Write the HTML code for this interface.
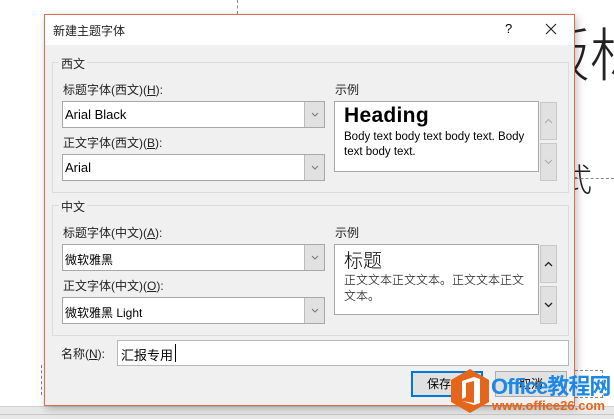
<!DOCTYPE html>
<html><head><meta charset="utf-8"><style>
*{margin:0;padding:0;box-sizing:border-box}
body{width:614px;height:419px;overflow:hidden;background:#fff;position:relative;font-family:"Liberation Sans","Noto Sans CJK SC",sans-serif;font-size:12px;color:#000}
.abs{position:absolute;white-space:nowrap}
.clip{position:absolute;left:0;top:0;width:614px;height:419px;overflow:hidden}
.dlg{left:44px;top:14px;width:531px;height:392px;border:1px solid #d4704a;background:#f0f0f0;box-shadow:2px 3px 8px rgba(0,0,0,.25)}
.tb{left:0;top:0;width:529px;height:30px;background:#fff}
.grp{border:1px solid #dcdcdc}
.lbl{font-size:12px;color:#222;white-space:nowrap}
.combo{background:#fff;border:1px solid #a8a8a8;height:27px;width:263px}
.combo span{position:absolute;left:2px;top:5px;font-size:13px}
.dd{position:absolute;right:0;top:0;width:20px;height:25px;background:#e1e1e1;border-left:1px solid #bcbcbc}
.sample{background:#fff;border:1px solid #a8a8a8}
.sb{background:#e1e1e1;border:1px solid #c8c8c8;width:17px}
.btn{border:1px solid #adadad;background:#e1e1e1;height:26px;width:72px;text-align:center;line-height:24px;font-size:12px}
u{text-decoration:underline}
</style></head><body>
<div class="clip">
<div class="abs" style="left:532px;top:16px;width:82px;overflow:hidden;font-size:58px;line-height:70px;color:#222;font-family:'Noto Sans CJK SC',sans-serif;font-weight:300">版标</div>
<div class="abs" style="left:560px;top:155px;font-size:32px;color:#222;font-family:'Noto Sans CJK SC',sans-serif;font-weight:300">式</div>
<div class="abs" style="left:560px;top:178px;width:54px;border-top:1px dashed #888"></div>
<div class="abs" style="left:237px;top:0;height:14px;border-left:1px dashed #888"></div>
<div class="abs" style="left:41px;top:365px;height:30px;border-left:1px dashed #888"></div>
<div class="abs" style="left:575px;top:370px;width:28px;height:28px;border:1px dashed #888;border-left:none"></div>
<div class="abs" style="left:0;top:406px;width:614px;height:13px;background:#e8e8e8;border-top:1px solid #d0d0d0"></div>
<div class="abs" style="left:0;top:414px;width:614px;border-top:1px solid #c8c8c8"></div>
</div>

<div class="abs dlg">
 <div class="abs tb"></div>
 <div class="abs lbl" style="left:8px;top:7px;font-size:12px">新建主题字体</div>
 <div class="abs" style="left:460px;top:6px;font-size:13px">?</div>
 <svg class="abs" style="left:500px;top:8px" width="12" height="12"><path d="M1 1L11 11M11 1L1 11" stroke="#222" stroke-width="1.1"/></svg>

 <div class="abs grp" style="left:7px;top:47px;width:517px;height:131px"></div>
 <div class="abs lbl" style="left:14px;top:40px;background:#f0f0f0;padding:0 2px">西文</div>
 <div class="abs lbl" style="left:18px;top:66px">标题字体(西文)(<u>H</u>):</div>
 <div class="abs combo" style="left:17px;top:86px"><span>Arial Black</span><div class="dd"><svg width="20" height="25"><path d="M7 11l3 3 3-3" fill="none" stroke="#777"/></svg></div></div>
 <div class="abs lbl" style="left:18px;top:119px">正文字体(西文)(<u>B</u>):</div>
 <div class="abs combo" style="left:17px;top:139px"><span>Arial</span><div class="dd"><svg width="20" height="25"><path d="M7 11l3 3 3-3" fill="none" stroke="#777"/></svg></div></div>
 <div class="abs lbl" style="left:290px;top:66px">示例</div>
 <div class="abs sample" style="left:289px;top:86px;width:205px;height:71px">
  <div class="abs" style="left:9px;top:2px;font-size:21px;font-weight:900;font-family:'Liberation Sans',sans-serif;letter-spacing:0.3px">Heading</div>
  <div class="abs" style="left:9px;top:28px;width:186px;white-space:normal;font-size:11.5px;line-height:15px">Body text body text body text. Body text body text.</div>
 </div>
 <div class="abs sb" style="left:495px;top:87px;height:38px"><svg width="15" height="36"><path d="M4 20l3.5-3.5 3.5 3.5" fill="none" stroke="#aaa"/></svg></div>
 <div class="abs sb" style="left:495px;top:128px;height:38px"><svg width="15" height="36"><path d="M4 16l3.5 3.5 3.5-3.5" fill="none" stroke="#aaa"/></svg></div>

 <div class="abs grp" style="left:7px;top:190px;width:517px;height:131px"></div>
 <div class="abs lbl" style="left:14px;top:183px;background:#f0f0f0;padding:0 2px">中文</div>
 <div class="abs lbl" style="left:18px;top:209px">标题字体(中文)(<u>A</u>):</div>
 <div class="abs combo" style="left:17px;top:229px"><span style="font-size:12px;top:6px">微软雅黑</span><div class="dd"><svg width="20" height="25"><path d="M7 11l3 3 3-3" fill="none" stroke="#777"/></svg></div></div>
 <div class="abs lbl" style="left:18px;top:262px">正文字体(中文)(<u>O</u>):</div>
 <div class="abs combo" style="left:17px;top:282px"><span style="font-size:12px;top:6px">微软雅黑 Light</span><div class="dd"><svg width="20" height="25"><path d="M7 11l3 3 3-3" fill="none" stroke="#777"/></svg></div></div>
 <div class="abs lbl" style="left:290px;top:209px">示例</div>
 <div class="abs sample" style="left:289px;top:229px;width:205px;height:71px">
  <div class="abs" style="left:9px;top:1px;font-size:19px;font-family:'Noto Sans CJK SC',sans-serif;font-weight:300">标题</div>
  <div class="abs" style="left:9px;top:27px;width:190px;white-space:normal;font-size:12px;line-height:16px;font-family:'Noto Sans CJK SC',sans-serif;font-weight:300">正文文本正文文本。正文文本正文文本。</div>
 </div>
 <div class="abs sb" style="left:495px;top:230px;height:38px"><svg width="15" height="36"><path d="M4 20l3.5-3.5 3.5 3.5" fill="none" stroke="#222" stroke-width="1.3"/></svg></div>
 <div class="abs sb" style="left:495px;top:271px;height:38px"><svg width="15" height="36"><path d="M4 16l3.5 3.5 3.5-3.5" fill="none" stroke="#222" stroke-width="1.3"/></svg></div>

 <div class="abs lbl" style="left:16px;top:330px">名称(<u>N</u>):</div>
 <div class="abs" style="left:72px;top:325px;width:452px;height:26px;background:#fff;border:1px solid #b8b8b8">
  <span class="abs" style="left:3px;top:4px;font-size:13px">汇报专用</span>
  <div class="abs" style="left:57px;top:3px;height:18px;border-left:1px solid #000"></div>
 </div>
 <div class="abs btn" style="left:366px;top:356px;border:2px solid #0078d7;line-height:22px">保存(<u>S</u>)</div>
 <div class="abs btn" style="left:450px;top:356px">取消</div>
</div>

<svg class="abs" style="left:448px;top:367px" width="44" height="48"><polygon points="22,2 41,13 41,35 22,46 3,35 3,13" fill="#e4661a"/><path d="M14 14l12-4 6 2v24l-6 2-12-4 12 2V14l-8 2v14l-4 2z" fill="#fff"/></svg>
<div class="abs" style="left:491px;top:374px;font-size:22px;line-height:26px;font-weight:bold;color:#1e88e5;letter-spacing:-1px;font-family:'Liberation Sans','Noto Sans CJK SC',sans-serif">Office教程网</div>
<div class="abs" style="left:492px;top:399px;font-size:13px;line-height:14px;font-weight:bold;color:#e4661a">www.office26.com</div>
</body></html>
